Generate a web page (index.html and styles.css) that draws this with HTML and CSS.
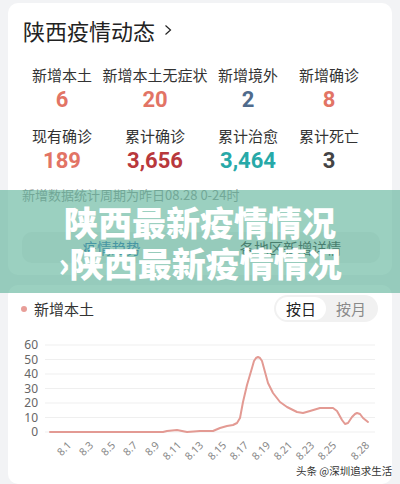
FILE: index.html
```html
<!DOCTYPE html>
<html>
<head>
<meta charset="UTF-8">
<title>陕西最新疫情情况</title>
<link rel="stylesheet" href="styles.css">
</head>
<body>
	<div class="card top-card">
		<div class="title">陕西疫情动态
			<svg class="chev" width="10" height="12" viewBox="0 0 10 12"><path d="M2.5 1.5 L7.5 6 L2.5 10.5" fill="none" stroke="#222" stroke-width="1.2"/></svg>
		</div>

		<div class="stats">
			<div class="cell"><span class="label">新增本土</span><span class="num salmon">6</span></div>
			<div class="cell"><span class="label">新增本土无症状</span><span class="num salmon">20</span></div>
			<div class="cell"><span class="label">新增境外</span><span class="num slate">2</span></div>
			<div class="cell"><span class="label">新增确诊</span><span class="num salmon">8</span></div>
			<div class="cell"><span class="label">现有确诊</span><span class="num salmon">189</span></div>
			<div class="cell"><span class="label">累计确诊</span><span class="num red">3,656</span></div>
			<div class="cell"><span class="label">累计治愈</span><span class="num teal">3,464</span></div>
			<div class="cell"><span class="label">累计死亡</span><span class="num gray">3</span></div>
		</div>

		<div class="note">新增数据统计周期为昨日08.28 0-24时</div>

		<div class="tabs">
			<div class="tab active">疫情趋势</div>
			<div class="tab">各地区新增详情</div>
		</div>
	</div>

	<div class="card chart-card">
		<div class="chart-head">
			<div class="legend"><span class="dot"></span>新增本土</div>
			<div class="toggle">
				<span class="opt on">按日</span>
				<span class="opt">按月</span>
			</div>
		</div>

		<svg class="chart" width="384" height="154" viewBox="0 0 384 154">
			<g stroke="#efefef" stroke-width="1">
				<line x1="37" y1="15" x2="367" y2="15"/>
				<line x1="37" y1="29.5" x2="367" y2="29.5"/>
				<line x1="37" y1="44" x2="367" y2="44"/>
				<line x1="37" y1="58.5" x2="367" y2="58.5"/>
				<line x1="37" y1="73" x2="367" y2="73"/>
				<line x1="37" y1="87.5" x2="367" y2="87.5"/>
				<line x1="37" y1="102" x2="367" y2="102"/>
			</g>
			<g class="ylab" text-anchor="end">
				<text x="30" y="19.3">60</text>
				<text x="30" y="33.8">50</text>
				<text x="30" y="48.3">40</text>
				<text x="30" y="62.8">30</text>
				<text x="30" y="77.3">20</text>
				<text x="30" y="91.8">10</text>
				<text x="30" y="106.3">0</text>
			</g>
			<polyline fill="none" stroke="#e39a93" stroke-width="2" stroke-linejoin="round" stroke-linecap="round"
				points="42,102 155,102 159,101 169,100 179,102 192,101 205,101 212,98 219,96 225,95 229,93 232,88 235,72 239,55 244,38 246,31 248,28 250,27 252,28 254,31 257,42 260,53 265,63 272,72 279,77 289,82 295,83 302,81 312,78 325,78 329,81 334,90 337,94 340,93 344,87 347,84 349,83 352,84 355,88 360,92"/>
			<g class="xlab" text-anchor="end">
				<text x="64" y="116" transform="rotate(-45 64 116)">8.1</text>
				<text x="86" y="116" transform="rotate(-45 86 116)">8.3</text>
				<text x="108" y="116" transform="rotate(-45 108 116)">8.5</text>
				<text x="130" y="116" transform="rotate(-45 130 116)">8.7</text>
				<text x="152" y="116" transform="rotate(-45 152 116)">8.9</text>
				<text x="174" y="116" transform="rotate(-45 174 116)">8.11</text>
				<text x="196" y="116" transform="rotate(-45 196 116)">8.13</text>
				<text x="219" y="116" transform="rotate(-45 219 116)">8.15</text>
				<text x="241" y="116" transform="rotate(-45 241 116)">8.17</text>
				<text x="263" y="116" transform="rotate(-45 263 116)">8.19</text>
				<text x="285" y="116" transform="rotate(-45 285 116)">8.21</text>
				<text x="307" y="116" transform="rotate(-45 307 116)">8.23</text>
				<text x="329" y="116" transform="rotate(-45 329 116)">8.25</text>
				<text x="362" y="116" transform="rotate(-45 362 116)">8.28</text>
			</g>
		</svg>
	</div>

	<div class="banner">
		<div class="banner-line">陕西最新疫情情况</div>
		<div class="banner-line">›陕西最新疫情情况</div>
	</div>

	<div class="mark">头条 @深圳追求生活</div>
</body>
</html>
```

FILE: styles.css
```css
body {
	margin: 0;
	background-color: #f2f3f5;
	font-family: "Noto Sans CJK SC", "Noto Sans", sans-serif;
	color: #333;
	width: 400px;
	height: 484px;
	overflow: hidden;
	position: relative;
}

.card {
	background-color: #fff;
	border-radius: 10px;
	margin: 0 8px;
}

.top-card {
	margin-top: 3px;
	padding: 13px 0 12px;
}

.title {
	font-size: 22px;
	line-height: 28px;
	color: #222;
	padding-left: 15px;
	display: flex;
	align-items: center;
}
.chev {
	margin-left: 8px;
}

.stats {
	display: grid;
	grid-template-columns: 84px 102px 84px 78px;
	row-gap: 13px;
	margin: 21px 0 0 12px;
}
.cell {
	display: flex;
	flex-direction: column;
	align-items: center;
	gap: 2px;
}
.label {
	font-size: 15px;
	line-height: 20px;
	color: #333;
	white-space: nowrap;
}
.num {
	font-family: Roboto, "Noto Sans", sans-serif;
	font-weight: 700;
	font-size: 22px;
	line-height: 26px;
}
.salmon { color: #e27465; }
.slate { color: #4f6b8c; }
.red { color: #b8383c; }
.teal { color: #27a9a8; }
.gray { color: #444; }

.note {
	font-size: 13px;
	line-height: 18px;
	color: #999;
	margin: 12px 0 0 14px;
}

.tabs {
	display: flex;
	margin: 28px 12px 0 14px;
	height: 31px;
	background-color: #f2f2f2;
	border-radius: 10px;
}
.tab {
	flex: 1;
	display: flex;
	align-items: center;
	justify-content: center;
	font-size: 14.5px;
	color: #333;
}
.tab.active {
	color: #2f6fb8;
}

.chart-card {
	margin-top: 10px;
	padding-top: 10px;
	height: 189px;
	overflow: hidden;
}
.chart-head {
	display: flex;
	justify-content: space-between;
	align-items: center;
	padding: 0 14px 0 13px;
}
.legend {
	display: flex;
	align-items: center;
	font-size: 15px;
	color: #333;
	gap: 7px;
}
.dot {
	width: 6px;
	height: 6px;
	border-radius: 50%;
	background-color: #e89e98;
}
.toggle {
	display: flex;
	align-items: center;
	width: 104px;
	height: 27px;
	box-sizing: border-box;
	padding: 0 2px;
	border-radius: 14px;
	background-color: #f1f1f1;
}
.opt {
	flex: 1;
	text-align: center;
	font-size: 15px;
	line-height: 23px;
	color: #8a8a8a;
}
.opt.on {
	background-color: #fff;
	border-radius: 12px;
	color: #222;
}

.chart {
	display: block;
	margin-top: 8px;
}
.ylab text {
	font-family: "Noto Sans", sans-serif;
	font-size: 12px;
	fill: #666;
}
.xlab text {
	font-family: "Noto Sans", sans-serif;
	font-size: 10.5px;
	fill: #888;
}

.banner {
	position: absolute;
	left: 0;
	top: 190px;
	width: 400px;
	height: 103px;
	box-sizing: border-box;
	padding-top: 11px;
	background-color: rgba(88, 177, 150, 0.6);
	text-align: center;
}
.banner-line {
	font-size: 34px;
	line-height: 41px;
	font-weight: 900;
	color: #fff;
	white-space: nowrap;
}

.mark {
	position: absolute;
	left: 296px;
	top: 463px;
	font-size: 10.5px;
	line-height: 16px;
	color: #333;
	white-space: nowrap;
	text-shadow: 0 0 2px #fff, 0 0 2px #fff;
}
```
